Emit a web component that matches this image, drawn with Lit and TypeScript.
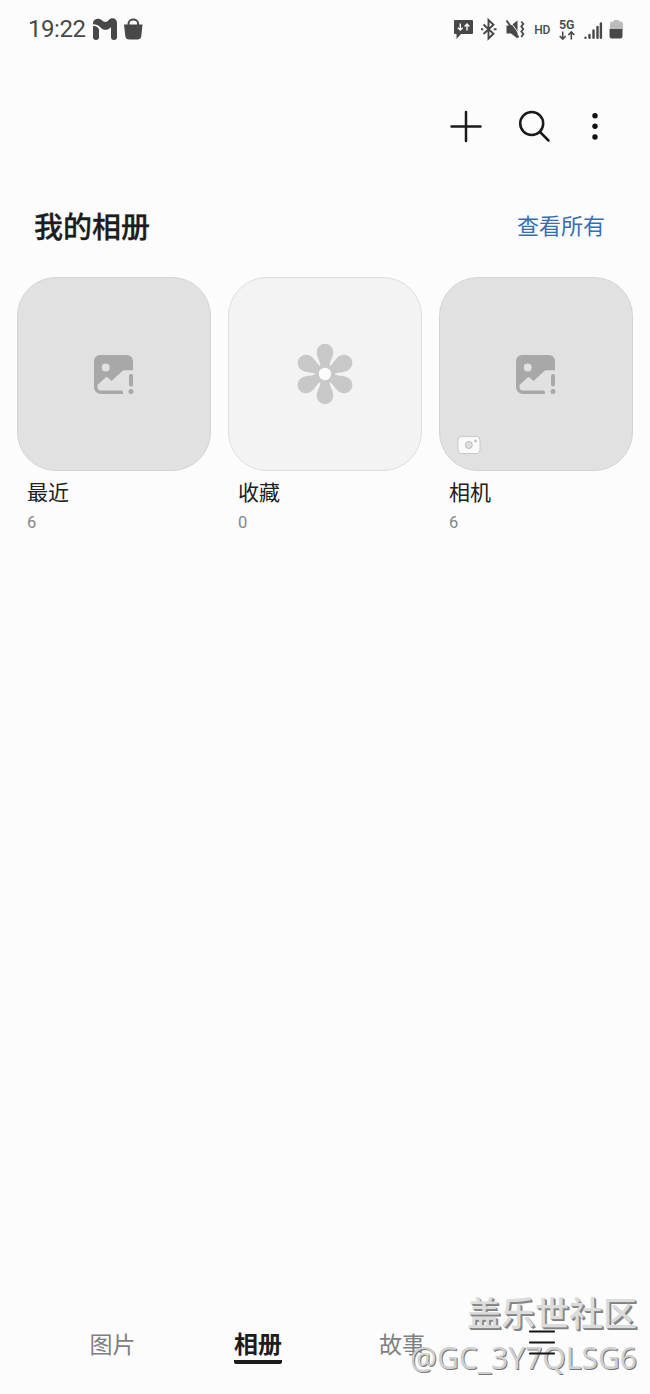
import { LitElement, html, css, svg } from 'lit';
import { customElement, property } from 'lit/decorators.js';

const missingIcon = html`<svg width="42" height="42" viewBox="0 0 42 42">
  <path fill="#a8a8a8" fill-rule="evenodd" d="M7 1H34a6 6 0 0 1 6 6V16.300H31.500a4 4 0 0 0-2.700 1.100L18.600 27 14.600 23.500a1.500 1.500 0 0 0-2 0L4.500 31V33a3.500 3.500 0 0 0 3.500 3.500H28.500a1.500 1.500 0 0 1 1.500 1.500V40H8A7 7 0 0 1 1 33V7A6 6 0 0 1 7 1Z M12.700 9.500a4 4 0 1 0 0 8 4 4 0 1 0 0-8Z"/>
  <rect x="36" y="20" width="4" height="12.500" rx="2" fill="#a8a8a8"/>
  <circle cx="38" cy="37.600" r="2.500" fill="#a8a8a8"/>
</svg>`;

const flowerIcon = html`<svg width="60" height="62" viewBox="-30 -31 60 62">
  ${[0, 60, 120, 180, 240, 300].map(
    (a) => svg`<path transform="rotate(${a})" fill="#c8c8c8" d="M0-1L-4.600-9C-5.500-14-8.300-17-8.300-22a8.300 8.300 0 0 1 16.600 0C8.300-17 5.500-14 4.600-9Z"/>`,
  )}
  <circle r="10" fill="#c8c8c8"/><circle r="6.200" fill="#fcfcfc"/>
</svg>`;

@customElement('status-bar')
class StatusBar extends LitElement {
  static styles = css`
    :host { display: flex; height: 58px; padding: 0 26px 0 28px; align-items: center; justify-content: space-between; box-sizing: border-box; color: #484848; }
    .left { display: flex; align-items: center; }
    .time { font: 24px/58px Roboto, sans-serif; letter-spacing: -0.45px; width: 64px; }
    svg { display: block; flex: none; }
  `;
  render() {
    return html`
      <div class="left">
        <span class="time">19:22</span>
        <svg width="54" height="26" viewBox="92 16 54 26">
          <path fill="#484848" d="M93 23.500C93 18.500 99 17.500 102 20.300c2 2.200 4.500 2.200 6.500 0C111.500 16.800 117 18 117 23V37a3 3 0 0 1-6 0V27c-2.500 3.500-7.500 3.800-10.500.5-2-2.200-4.500-3.300-7.500-3.200Z"/>
          <path fill="#484848" d="M93 26c3.300-.3 5 1.200 6 3.200V37a3 3 0 0 1-6 0Z"/>
          <path fill="#484848" d="M124 24.500h18.500l-1.200 11.500a4 4 0 0 1-4 3.500h-8a4 4 0 0 1-4-3.500Z"/>
          <path fill="none" stroke="#484848" stroke-width="2" d="M128.500 25v-1.500a4.800 4 0 0 1 9.600 0V25"/>
        </svg>
      </div>
      <svg width="172" height="28" viewBox="452 15 172 28" fill="none" stroke="#484848">
        <path fill="#484848" stroke="none" d="M455 20h17q1 0 1 1v12q0 1-1 1h-11l-4.500 5v-5H455q-1 0-1-1V21q0-1 1-1Z"/>
        <path stroke="#fcfcfc" stroke-width="1.400" d="M460.300 23.500v6.500m-2.400-2.300 2.400 2.400 2.400-2.400M467 30.500V24m-2.400 2.400L467 24l2.400 2.400"/>
        <path stroke-width="1.900" d="m483.500 24.500 10 9.300-5 4.700V20l5 4.700-10 9.300"/>
        <path stroke-width="2" d="M481 29.200h2.200m10.600 0h2.700"/>
        <path fill="#484848" stroke="none" d="M506.500 25.500h4.500l6.500-5v18l-6.500-5h-4.500Z"/>
        <path stroke="#fcfcfc" stroke-width="1" d="m509.200 20.200 9 12.500"/>
        <path stroke-width="1.900" d="m506.500 20.500 12 17"/>
        <path stroke-width="1.800" d="m521.300 21.500 2 2.500-2 2.500 2 2.500-2 2.500 2 2.500-2 3"/>
        <text x="534.300" y="33.500" fill="#484848" stroke="none" font-family="Roboto" font-size="12" font-weight="500" textLength="16">HD</text>
        <text x="559" y="28.500" fill="#484848" stroke="none" font-family="Roboto" font-size="12" font-weight="600" textLength="15.500" lengthAdjust="spacingAndGlyphs">5G</text>
        <path stroke-width="1.600" d="M562.700 31.500v7.500m-3-3 3 3 3-3M571.300 39.500V32m-3 3 3-3 3 3"/>
        <path stroke-width="2.400" stroke-linecap="round" d="M585.500 37.700v0M589.500 35v2.700M593.500 30.500v7.200M597.500 27v10.700M600.900 23.500v14.200"/>
        <path fill="#bcbcbc" stroke="none" d="M610 29v-5q0-2.500 2.500-2.500h1.500V20h5v1.500h1.500q2.500 0 2.500 2.500v5Z"/>
        <path fill="#484848" stroke="none" d="M609.500 29h13v7q0 2.500-2.500 2.500h-8q-2.500 0-2.500-2.500Z"/>
      </svg>`;
  }
}

@customElement('album-card')
class AlbumCard extends LitElement {
  @property() name = '';
  @property({ type: Number }) count = 0;
  @property() kind = '';
  static styles = css`
    :host { display: block; }
    .cover { position: relative; display: flex; align-items: center; justify-content: center; height: 194px; box-sizing: border-box; border: 1px solid #d4d4d4; border-radius: 39px; background: #e1e1e1; }
    .cover.empty { background: #f3f3f3; border-color: #dedede; }
    .badge { position: absolute; left: 17px; bottom: 15px; display: block; }
    .cover > svg { display: block; }
    .missing { display: flex; padding: 1px 1px 0 0; }
    .name { padding-left: 10px; font: 21px/30px 'Noto Sans CJK SC', sans-serif; color: #202020; margin-top: 5px; }
    .count { padding-left: 10px; font: 16.500px/20px Roboto, sans-serif; color: #868686; margin-top: 7px; }
  `;
  render() {
    return html`
      <div class="cover ${this.kind}">
        ${this.kind === 'empty' ? flowerIcon : html`<span class="missing">${missingIcon}</span>`}
        ${this.kind === 'camera'
          ? html`<svg class="badge" width="24" height="20" viewBox="0 0 24 20">
              <rect x="1" y="1.500" width="22" height="17" rx="3.500" fill="#fafafa" stroke="#c9c9c9"/>
              <circle cx="11.800" cy="10" r="3.500" fill="#dedede" stroke="#bdbdbd"/>
              <circle cx="18.500" cy="6" r="1.500" fill="#c4c4c4"/>
            </svg>`
          : ''}
      </div>
      <div class="name">${this.name}</div>
      <div class="count">${this.count}</div>`;
  }
}

@customElement('app-root')
class AppRoot extends LitElement {
  static styles = css`
    :host { display: flex; flex-direction: column; position: relative; width: 650px; height: 1394px; overflow: hidden; background: #fcfcfc; font-family: 'Noto Sans CJK SC', sans-serif; }
    .tools { display: flex; justify-content: flex-end; height: 60px; margin-top: 39px; padding-right: 30px; }
    .heading { display: flex; align-items: center; justify-content: space-between; height: 50px; margin-top: 43px; padding: 0 45px 0 34px; }
    h1 { margin: 0; font-size: 29px; line-height: 50px; font-weight: 500; color: #1c1c1c; -webkit-text-stroke: 0.3px #1c1c1c; }
    .all { font-size: 22px; line-height: 48px; padding-bottom: 2px; color: #3a6cb0; }
    .albums { display: grid; grid-template-columns: repeat(3, 194px); gap: 17px; padding: 0 17px; margin-top: 27px; }
    .spacer { flex: 1; }
    .tabs { display: grid; grid-template-columns: 145px 146px 142px 1fr; padding-left: 40px; height: 74px; text-align: center; }
    .tab { font-size: 23px; line-height: 46px; color: #7f7f7f; }
    .tab span { display: inline-block; height: 40px; }
    .tab.active { font-weight: 700; font-size: 24px; color: #1c1c1c; }
    .tab.active span { border-bottom: 4px solid #1c1c1c; border-radius: 2px; }
    .menu { display: block; position: relative; z-index: 2; margin: 8px 0 0 55px; }
    .mark { position: absolute; z-index: 1; right: 13px; top: 1289px; display: flex; flex-direction: column; align-items: flex-end; white-space: nowrap; }
    .community { font-size: 34px; line-height: 46px; font-weight: 500; text-shadow: 1px 1px 0 #8c8c8c, 2px 2px 0 #808080; color: #dcdcdc; }
    .user { font: 30px/46px 'Noto Sans', sans-serif; text-shadow: 1px 1px 0 #777; color: #d0d0d0; }
  `;
  render() {
    return html`
      <status-bar></status-bar>
      <div class="tools">
        <svg width="180" height="60" viewBox="440 97 180 60" fill="none" stroke="#1a1a1a" stroke-width="2.500" stroke-linecap="round">
          <path d="M451.500 126.500h29M466 112v29"/>
          <circle cx="531.700" cy="123.500" r="11.500"/>
          <path d="m540 132 8.500 8.500"/>
          <g fill="#111" stroke="none"><circle cx="595" cy="115.700" r="2.700"/><circle cx="595" cy="126.300" r="2.700"/><circle cx="595" cy="137" r="2.700"/></g>
        </svg>
      </div>
      <div class="heading"><h1>我的相册</h1><span class="all">查看所有</span></div>
      <div class="albums">
        <album-card name="最近" count="6"></album-card>
        <album-card name="收藏" count="0" kind="empty"></album-card>
        <album-card name="相机" count="6" kind="camera"></album-card>
      </div>
      <div class="spacer"></div>
      <div class="tabs">
        <div class="tab"><span>图片</span></div>
        <div class="tab active"><span>相册</span></div>
        <div class="tab"><span>故事</span></div>
        <svg class="menu" width="28" height="28" viewBox="0 0 28 28" stroke="#141414" stroke-width="2.200" stroke-linecap="round"><path d="M2 3.500h24M2 14.500h24M2 25.500h24"/></svg>
      </div>
      <div class="mark"><span class="community">盖乐世社区</span><span class="user">@GC_3Y7QLSG6</span></div>`;
  }
}
